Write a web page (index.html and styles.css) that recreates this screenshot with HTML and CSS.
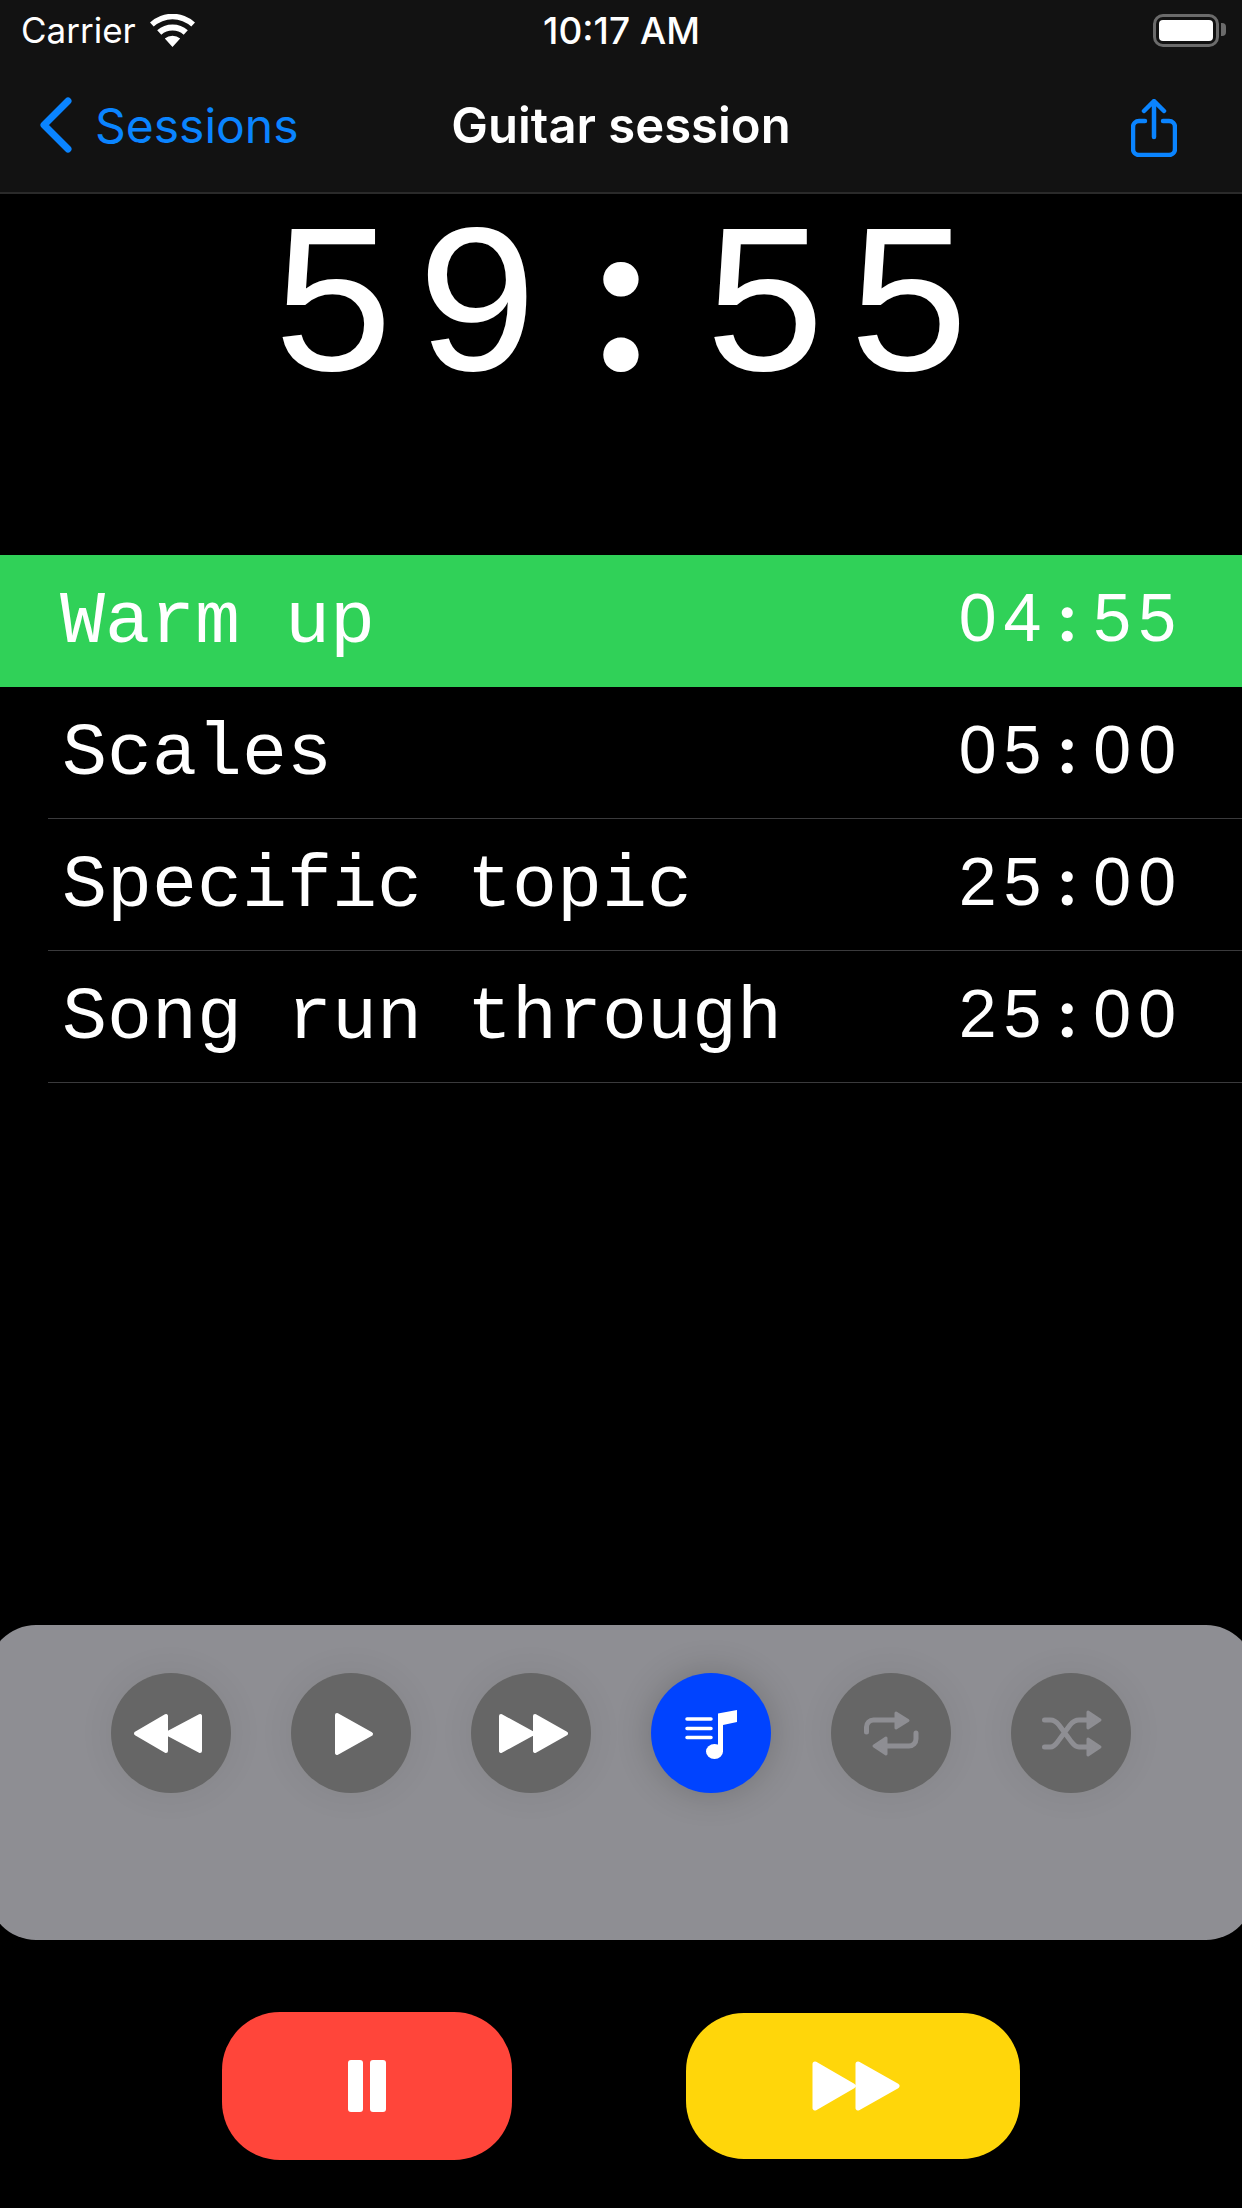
FILE: index.html
```html
<!DOCTYPE html>
<html lang="en">
<head>
<meta charset="utf-8">
<title>Guitar session</title>
<link rel="stylesheet" href="styles.css">
</head>
<body>
<div class="screen">
  <header class="header">
    <div class="status">
      <div class="status-left">
        <span class="carrier">Carrier</span>
        <svg class="wifi" viewBox="0 0 45 33"><path d="M22.5 33 14.8 24.6a11.5 11.5 0 0 1 15.4 0Z M11.3 20.8 7.2 16.3a23 23 0 0 1 30.6 0l-4.1 4.5a17 17 0 0 0-22.4 0Z M3.7 12.5 0 8.4a33.5 33.5 0 0 1 45 0l-3.7 4.1a28 28 0 0 0-37.6 0Z" fill="#fff"/></svg>
      </div>
      <span class="clock">10:17 AM</span>
      <div class="battery"><span class="battery-fill"></span><span class="battery-nub"></span></div>
    </div>
    <nav class="nav">
      <div class="back">
        <svg class="chevron" viewBox="0 0 33 56"><path d="M29 4 5 28l24 24" fill="none" stroke="#0a84ff" stroke-width="7" stroke-linecap="round" stroke-linejoin="round"/></svg>
        <span class="back-label">Sessions</span>
      </div>
      <h1 class="title">Guitar session</h1>
      <svg class="share" viewBox="0 0 46 58"><path d="M14 22H8a6 6 0 0 0-6 6v22a6 6 0 0 0 6 6h30a6 6 0 0 0 6-6V28a6 6 0 0 0-6-6h-6" fill="none" stroke="#0a84ff" stroke-width="4.5" stroke-linecap="round"/><path d="M23 38V3M13 12l10-10 10 10" fill="none" stroke="#0a84ff" stroke-width="4.5" stroke-linecap="round" stroke-linejoin="round"/></svg>
    </nav>
  </header>

  <div class="timer">59<span class="colon">:</span>55</div>

  <ul class="list">
    <li class="row row-active"><span class="name">Warm up</span><span class="time">04<span class="colon">:</span>55</span></li>
    <li class="row"><span class="name">Scales</span><span class="time">05<span class="colon">:</span>00</span></li>
    <li class="row"><span class="name">Specific topic</span><span class="time">25<span class="colon">:</span>00</span></li>
    <li class="row"><span class="name">Song run through</span><span class="time">25<span class="colon">:</span>00</span></li>
  </ul>

  <div class="spacer"></div>

  <section class="panel">
    <div class="circle">
      <svg class="ic" viewBox="0 0 120 120"><path d="M25 60.5 55 43v35ZM56 60.5 89 43v35Z" fill="#fff" stroke="#fff" stroke-width="4" stroke-linejoin="round"/></svg>
    </div>
    <div class="circle">
      <svg class="ic" viewBox="0 0 120 120"><path d="M46 42 80 61 46 80Z" fill="#fff" stroke="#fff" stroke-width="4" stroke-linejoin="round"/></svg>
    </div>
    <div class="circle">
      <svg class="ic" viewBox="0 0 120 120"><path d="M30 43 62 60.5 30 78ZM64 43 95 60.5 64 78Z" fill="#fff" stroke="#fff" stroke-width="4" stroke-linejoin="round"/></svg>
    </div>
    <div class="circle circle-on">
      <svg class="ic" viewBox="0 0 120 120"><path d="M36 46h24M36 55.5h24M36 64.500h24" fill="none" stroke="#fff" stroke-width="3.500" stroke-linecap="round"/><path d="M67 40.500 86 37v12l-14 3v27h-5Z" fill="#fff"/><ellipse cx="63.500" cy="78.500" rx="8.500" ry="7.500" fill="#fff"/></svg>
    </div>
    <div class="circle">
      <svg class="ic" viewBox="0 0 120 120"><path d="M35.500 59v-5a7 7 0 0 1 7-7H66M85 60v6a7 7 0 0 1-7 7H54" fill="none" stroke="#8e8e93" stroke-width="5" stroke-linecap="round"/><path d="M65 40 77 47.500 65 55ZM55 65 43 73 55 81Z" fill="#8e8e93" stroke="#8e8e93" stroke-width="3" stroke-linejoin="round"/></svg>
    </div>
    <div class="circle">
      <svg class="ic" viewBox="0 0 120 120"><path d="M33.500 47h6c4 0 6 2 8.500 5l11 15c2.500 3 4.500 7 9 7h9M33.500 74h6c4 0 6-4 8.500-7l11-15c2.500-3 4.500-5 9-5h9" fill="none" stroke="#8e8e93" stroke-width="5" stroke-linecap="round"/><path d="M77 39 89 47 77 55ZM77 66 89 74 77 82Z" fill="#8e8e93" stroke="#8e8e93" stroke-width="3" stroke-linejoin="round"/></svg>
    </div>
  </section>

  <footer class="actions">
    <button class="action action-pause">
      <svg class="pause-ic" viewBox="0 0 38 52"><rect x="0" y="0" width="15" height="52" rx="3" fill="#fff"/><rect x="22" y="0" width="16" height="52" rx="3" fill="#fff"/></svg>
    </button>
    <button class="action action-next">
      <svg class="next-ic" viewBox="0 0 88 52"><path d="M3 4 41 26 3 48ZM46 4 85 26 46 48Z" fill="#fff" stroke="#fff" stroke-width="5" stroke-linejoin="round"/></svg>
    </button>
  </footer>
</div>
</body>
</html>
```
FILE: styles.css
```css
* { box-sizing: border-box; }
html, body { margin: 0; padding: 0; background: #000; }
.screen {
  width: 1242px;
  height: 2208px;
  display: flex;
  flex-direction: column;
  overflow: hidden;
  background: #000;
  color: #fff;
  font-family: Inter, "Liberation Sans", sans-serif;
}
.header { background: #121212; border-bottom: 2px solid #2a2a2a; height: 194px; flex: none; }
.status {
  height: 60px;
  display: grid;
  grid-template-columns: 1fr auto 1fr;
  align-items: center;
  padding: 0 16px 0 21px;
}
.status-left { display: flex; align-items: center; gap: 14px; }
.carrier { font-size: 35px; }
.wifi { width: 45px; height: 33px; }
.clock { font-size: 37px; font-weight: 500; margin-right: 4px; }
.battery {
  justify-self: end;
  position: relative;
  width: 66px;
  height: 33px;
  border: 3px solid #6b6b6b;
  border-radius: 10px;
  margin-right: 7px;
  padding: 3px;
}
.battery-fill { display: block; height: 100%; background: #fff; border-radius: 4px; }
.battery-nub {
  position: absolute;
  right: -10px;
  top: 6px;
  width: 5px;
  height: 13px;
  background: #6b6b6b;
  border-radius: 0 4px 4px 0;
}
.nav { height: 130px; display: flex; align-items: center; justify-content: space-between; position: relative; padding: 0 65px 0 39px; }
.back { display: flex; align-items: center; gap: 23px; color: #0a84ff; }
.chevron { width: 33px; height: 56px; }
.back-label { font-size: 48px; }
.title {
  position: absolute;
  left: 0;
  right: 0;
  margin: 0;
  text-align: center;
  font-size: 49px;
  font-weight: 600;
}
.share { width: 46px; height: 58px; margin-top: 6px; }
.timer {
  height: 361px;
  flex: none;
  text-align: center;
  font-family: "Liberation Mono", monospace;
  font-size: 213px;
  line-height: 178px;
  letter-spacing: 16px;
  padding: 4px 0 0 16px;
}
.colon { display: inline-block; text-align: center; letter-spacing: 0; font-family: Lato, sans-serif; font-weight: 900; }
.timer .colon { width: 144px; font-size: 216px; margin: 0 8px 0 -8px; }
.list { list-style: none; margin: 0; padding: 0; flex: none; }
.row {
  height: 132px;
  display: flex;
  align-items: center;
  justify-content: space-between;
  padding: 4px 62px 0 14px;
  font-family: "Liberation Mono", monospace;
  font-size: 75px;
  border-bottom: 1px solid #3a3a3c;
  margin-left: 48px;
}
.row-active { background: #30d158; margin-left: 0; padding-left: 60px; border-bottom-color: #30d158; }
.time { font-family: "Liberation Sans", sans-serif; font-size: 68px; letter-spacing: 7px; margin: 0 -3px 14px 0; }
.time .colon { width: 45px; font-size: 67px; margin: 0 3.5px 0 -3.5px; }
.spacer { flex: 1; }
.panel {
  flex: none;
  height: 315px;
  margin: 0 -12px 72px;
  padding-top: 48px;
  background: #8e8e93;
  border-radius: 48px;
  display: flex;
  justify-content: center;
  gap: 60px;
}
.circle {
  width: 120px;
  height: 120px;
  border-radius: 50%;
  background: #666;
  box-shadow: 0 0 36px rgba(0, 0, 0, 0.07);
}
.circle-on { background: #0043ff; box-shadow: 0 0 36px rgba(0, 0, 0, 0.2); }
.ic { display: block; width: 120px; height: 120px; }
.actions { flex: none; display: flex; justify-content: center; align-items: center; gap: 174px; height: 148px; margin-bottom: 48px; }
.action { border: 0; padding: 0; display: flex; align-items: center; justify-content: center; border-radius: 58px; }
.action-pause { width: 290px; height: 148px; background: #ff453a; }
.action-next { width: 334px; height: 146px; background: #ffd60a; }
.pause-ic { width: 38px; height: 52px; }
.next-ic { width: 88px; height: 52px; margin-left: 6px; }
```
